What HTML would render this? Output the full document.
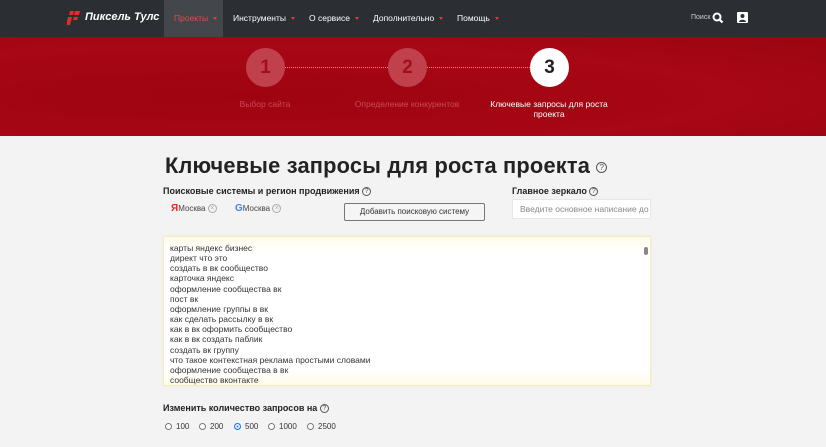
<!DOCTYPE html>
<html><head><meta charset="utf-8"><style>
*{margin:0;padding:0;box-sizing:border-box}
body{width:826px;height:447px;overflow:hidden;background:#f3f3f3;font-family:"Liberation Sans","Noto Sans CJK SC",sans-serif;position:relative}
.nav{position:absolute;left:0;top:0;width:826px;height:37px;background:#2b2e33}
.nav .it{position:absolute;top:13px;font-size:8.5px;color:#fff}
.nav .it:after{content:"";display:inline-block;margin-left:5px;border-left:2.5px solid transparent;border-right:2.5px solid transparent;border-top:3px solid #e23a3a;vertical-align:middle}
.hero{position:absolute;left:0;top:37px;width:826px;height:99px;background:radial-gradient(ellipse at 30% 60%,#9e0410,#a80715 60%,#9a0510)}
.c{position:absolute;width:39px;height:39px;border-radius:50%;background:#c0414c;color:#a0101c;font-weight:bold;font-size:19px;text-align:center;line-height:39px}
.dots{position:absolute;top:67px;height:0;border-top:1px dotted #d98a90}
.lab{position:absolute;font-size:8.5px;color:#c64b55;text-align:center}
h1{position:absolute;left:165px;top:153px;font-size:21.8px;font-weight:bold;color:#222;letter-spacing:0.2px}
.q{display:inline-block;width:9px;height:9px;border:1px solid #555;border-radius:50%;font-size:7px;line-height:7px;text-align:center;color:#555;font-weight:normal;vertical-align:middle}
.lbl{position:absolute;font-size:9px;font-weight:bold;color:#222}
.ta{position:absolute;left:163px;top:236px;width:488px;height:150px;background:linear-gradient(#fffbe8,#fff 10%,#fff 90%,#fffbe8);border:1px solid #f3ecc8;box-shadow:0 0 2px #f5ecc0;font-size:8.5px;color:#333;line-height:10.15px;padding:6px 6px}
.sb{position:absolute;right:2px;top:10px;width:4px;height:8px;background:#888;border-radius:2px}
.r{position:absolute;top:422px;font-size:8px;color:#333}
.r i{display:inline-block;width:7px;height:7px;border:1px solid #777;border-radius:50%;vertical-align:-1px;margin-right:4px;background:#fff}
</style></head><body>
<div class="nav">
 <div style="position:absolute;left:67px;top:10px;width:14px;height:16px">
  <svg width="14" height="16"><path d="M3 1h4l-1 4H2zM8 1h5l-1 4H7zM1 7h4l-2 8H-1zM7 7h4l-1 3H6z" fill="#e62b2b"/></svg></div>
 <div style="position:absolute;left:85px;top:11px;color:#fff;font-weight:bold;font-style:italic;font-size:11px">Пиксель Тулс</div>
 <div style="position:absolute;left:164px;top:0;width:59px;height:37px;background:#43464a"></div>
 <div class="it" style="left:174px;color:#e24a4a">Проекты</div>
 <div class="it" style="left:233px">Инструменты</div>
 <div class="it" style="left:309px">О сервисе</div>
 <div class="it" style="left:373px">Дополнительно</div>
 <div class="it" style="left:457px">Помощь</div>
 <div style="position:absolute;left:691px;top:14px;font-size:7px;color:#ccc">Поиск</div>
 <svg style="position:absolute;left:712px;top:12px" width="12" height="12"><circle cx="5" cy="5" r="3.5" stroke="#fff" stroke-width="2" fill="none"/><path d="M7.5 7.5l3 3" stroke="#fff" stroke-width="2.2"/></svg>
 <svg style="position:absolute;left:737px;top:12px" width="11" height="11"><rect width="11" height="11" rx="1" fill="#fff"/><circle cx="5.5" cy="4" r="2" fill="#2b2e33"/><path d="M2 10c0-3 7-3 7 0z" fill="#2b2e33"/></svg>
</div>
<div class="hero"></div>
<div class="dots" style="left:284px;width:104px"></div>
<div class="dots" style="left:426px;width:104px"></div>
<div class="c" style="left:246px;top:48px">1</div>
<div class="c" style="left:388px;top:48px">2</div>
<div class="c" style="left:530px;top:48px;background:#fff;color:#222">3</div>
<div class="lab" style="left:215px;top:99px;width:100px">Выбор сайта</div>
<div class="lab" style="left:342px;top:99px;width:130px">Определение конкурентов</div>
<div class="lab" style="left:484px;top:99px;width:130px;color:#fff">Ключевые запросы для роста<br>проекта</div>
<h1>Ключевые запросы для роста проекта <span class="q" style="width:11px;height:11px;font-size:8px;line-height:9px">?</span></h1>
<div class="lbl" style="left:163px;top:186px">Поисковые системы и регион продвижения <span class="q">?</span></div>
<div class="lbl" style="left:512px;top:186px">Главное зеркало <span class="q">?</span></div>
<div style="position:absolute;left:171px;top:203px;font-size:8px;color:#444"><b style="color:#e22;font-size:10px">Я</b>Москва <span class="q" style="border-color:#aaa;color:#aaa">×</span></div>
<div style="position:absolute;left:235px;top:203px;font-size:8px;color:#444"><b style="color:#4285f4;font-size:10px">G</b>Москва <span class="q" style="border-color:#aaa;color:#aaa">×</span></div>
<div style="position:absolute;left:344px;top:203px;width:141px;height:18px;border:1px solid #777;border-radius:2px;background:#f5f5f5;font-size:8px;color:#333;text-align:center;line-height:16px">Добавить поисковую систему</div>
<div style="position:absolute;left:512px;top:199px;width:139px;height:20px;background:#fff;border:1px solid #e8e8e8;font-size:8.5px;color:#888;line-height:18px;padding-left:7px;white-space:nowrap;overflow:hidden">Введите основное написание до</div>
<div class="ta">карты яндекс бизнес<br>директ что это<br>создать в вк сообщество<br>карточка яндекс<br>оформление сообщества вк<br>пост вк<br>оформление группы в вк<br>как сделать рассылку в вк<br>как в вк оформить сообщество<br>как в вк создать паблик<br>создать вк группу<br>что такое контекстная реклама простыми словами<br>оформление сообщества в вк<br>сообщество вконтакте<div class="sb"></div></div>
<div class="lbl" style="left:163px;top:403px">Изменить количество запросов на <span class="q">?</span></div>
<div class="r" style="left:165px"><i></i>100</div>
<div class="r" style="left:199px"><i></i>200</div>
<div class="r" style="left:234px"><i style="background:#1a73e8;box-shadow:inset 0 0 0 1.5px #fff;border-color:#1a73e8"></i>500</div>
<div class="r" style="left:268px"><i></i>1000</div>
<div class="r" style="left:307px"><i></i>2500</div>
</body></html>
